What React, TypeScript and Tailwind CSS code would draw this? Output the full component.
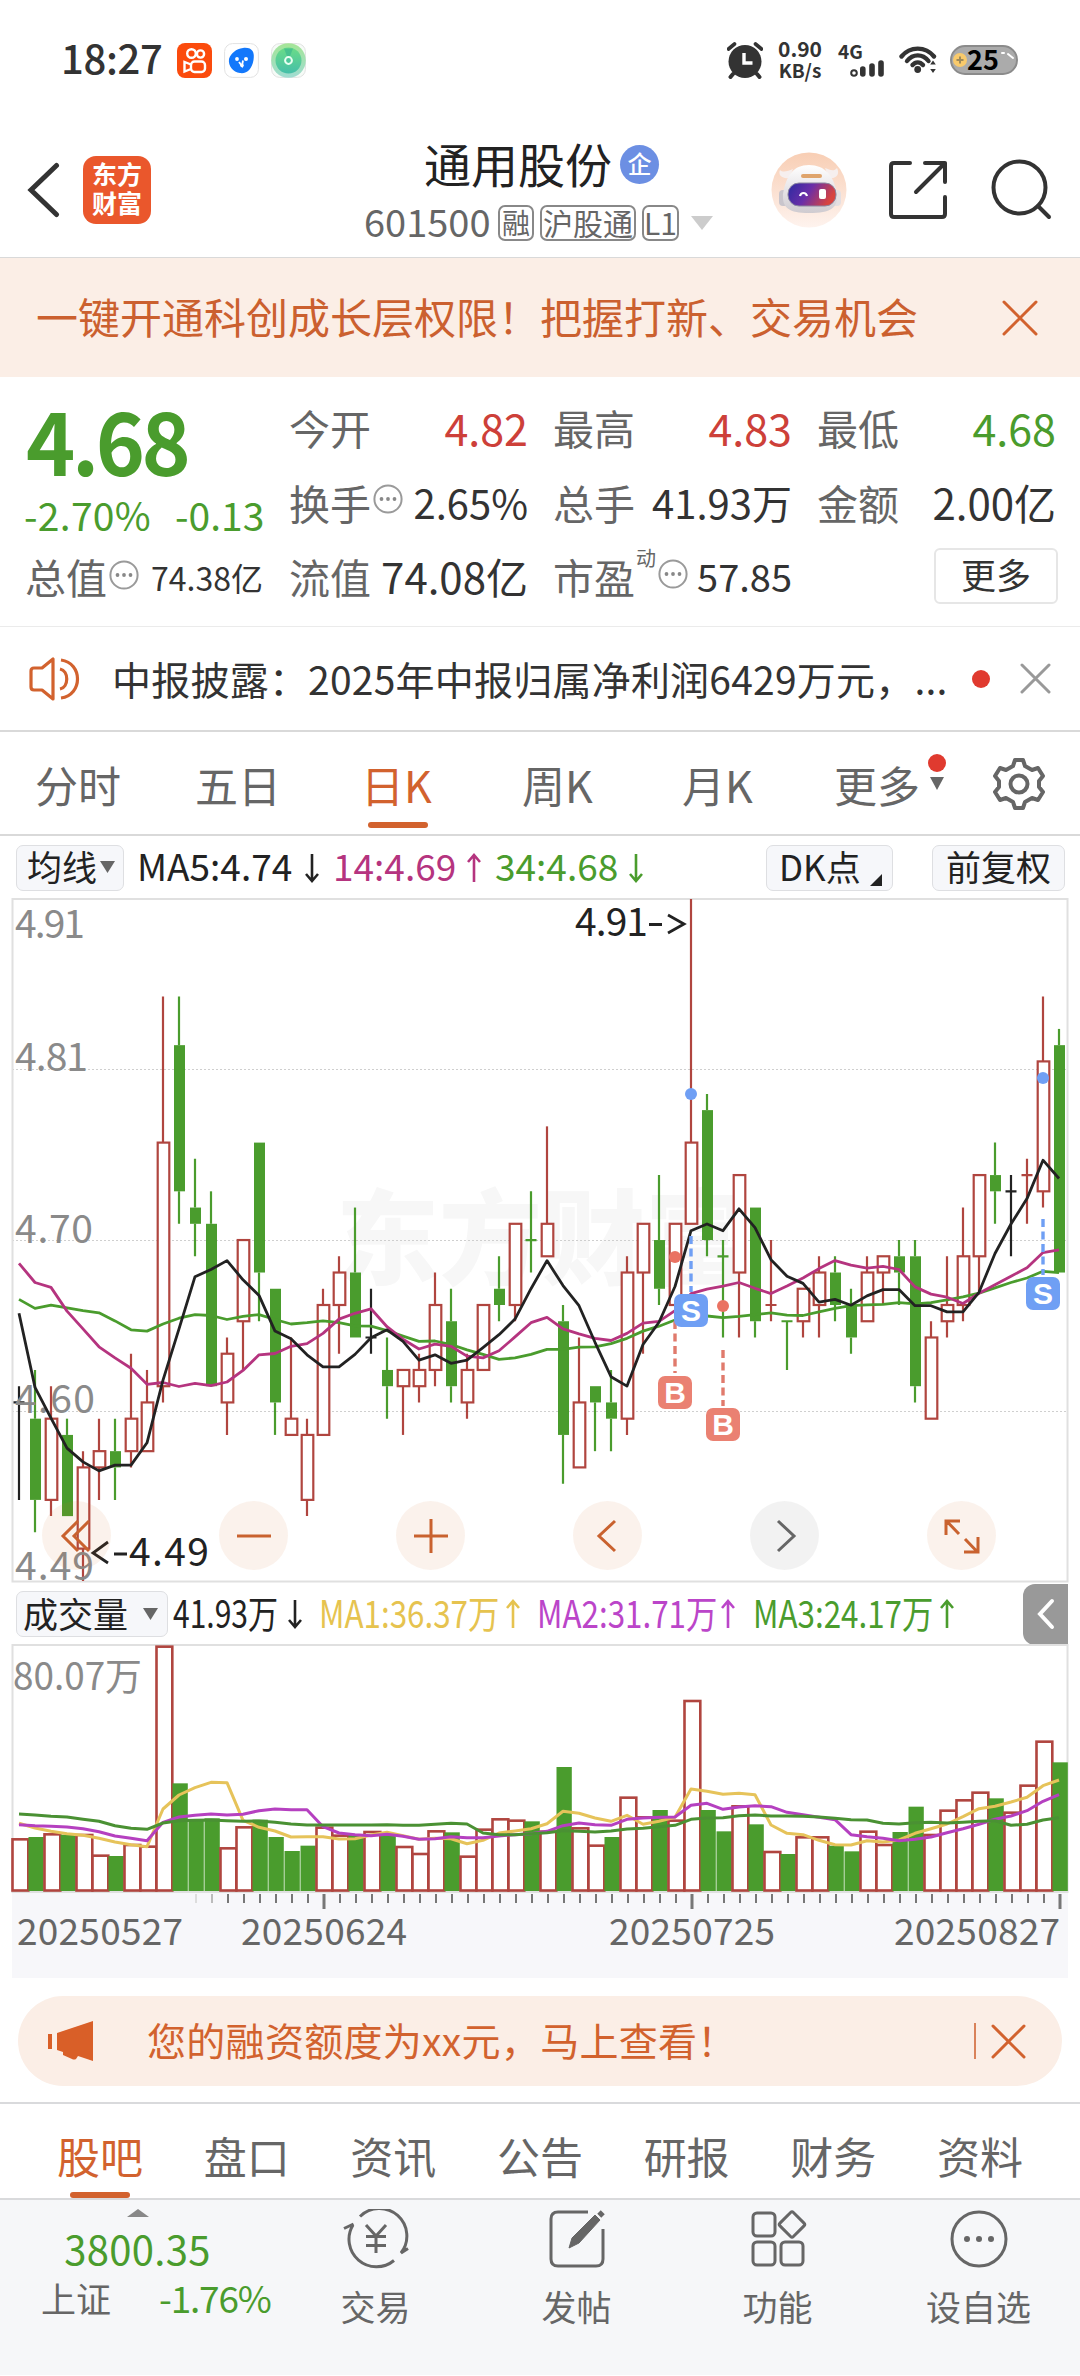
import React from "react";

type Kind = "r" | "g" | "k";
/** kind, high, body top, body bottom, low: all in cents below the chart's top price */
type Candle = [Kind, number, number, number, number];

const RED = "#b0453f";
const GREEN = "#4a9c2d";
const INK = "#222222";
const ORANGE = "#d2622e";

const candles: Candle[] = [
  ["k", 30, 31, 31, 37], ["g", 29, 32, 37, 39], ["r", 30, 32, 37, 38], ["g", 32, 33, 38, 38],
  ["r", 34, 35, 40, 42], ["r", 32, 34, 35, 37], ["g", 32, 34, 35, 37], ["r", 28, 32, 34, 35],
  ["r", 29, 31, 34, 34], ["r", 6, 15, 30, 31], ["g", 6, 9, 18, 20], ["g", 16, 19, 20, 22],
  ["g", 18, 20, 30, 30], ["r", 27, 28, 31, 33], ["r", 21, 21, 26, 29], ["g", 15, 15, 23, 26],
  ["g", 24, 24, 31, 33], ["r", 27, 32, 33, 33], ["r", 32, 33, 37, 38], ["r", 24, 25, 33, 33],
  ["r", 22, 23, 25, 28], ["g", 19, 23, 27, 27], ["k", 24, 27, 27, 28], ["g", 27, 29, 30, 32],
  ["r", 29, 29, 30, 33], ["r", 28, 29, 30, 31], ["r", 23, 25, 29, 30], ["g", 24, 26, 30, 31],
  ["r", 28, 29, 31, 32], ["r", 25, 25, 29, 29], ["g", 22, 24, 25, 26], ["r", 20, 20, 25, 26],
  ["g", 18, 21, 21, 23], ["r", 14, 20, 22, 22], ["g", 25, 26, 33, 36], ["r", 27, 31, 35, 35],
  ["g", 30, 30, 31, 34], ["g", 29, 31, 32, 34], ["r", 22, 23, 32, 33], ["r", 20, 20, 23, 28],
  ["g", 17, 21, 24, 25], ["r", 20, 20, 25, 25], ["r", 0, 15, 20, 20], ["g", 12, 13, 21, 22],
  ["g", 21, 22, 22, 27], ["r", 17, 17, 23, 27], ["g", 19, 19, 26, 27], ["r", 21, 25, 25, 26],
  ["g", 26, 26, 26, 29], ["r", 24, 24, 26, 27], ["r", 22, 23, 25, 27], ["g", 22, 23, 25, 26],
  ["g", 24, 25, 27, 28], ["r", 22, 23, 26, 26], ["r", 22, 22, 23, 25], ["g", 21, 22, 23, 25],
  ["g", 21, 22, 30, 31], ["r", 26, 27, 32, 32], ["r", 22, 25, 26, 27], ["r", 19, 22, 25, 26],
  ["r", 17, 17, 22, 24.3], ["g", 15, 17, 18, 20], ["k", 17, 18, 18, 22], ["r", 16, 17, 17, 20],
  ["r", 6, 10, 18, 19], ["g", 8, 9, 23, 23],
];

const ma5 = [950,1116,1185,1252,1283,1303,1290,1290,1240,1100,985,868,852,832,875,910,990,1007,1043,1070,1070,1042,1005,987,1013,1055,1043,1062,1055,1027,998,963,895,832,888,933,1015,1092,1113,1020,970,890,765,750,765,716,758,830,867,883,925,919,932,911,897,897,933,933,947,947,903,816,750,693,607,648];
const ma14 = [838,881,892,945,985,1025,1050,1073,1109,1105,1114,1107,1112,1104,1078,1043,1040,1024,1018,995,963,950,940,980,1008,1030,1019,1024,1046,1050,1034,1003,971,959,985,996,1006,1011,995,972,968,944,906,896,889,881,894,906,889,871,850,832,842,849,845,852,891,907,914,928,905,886,867,848,814,808];
const ma34 = [919,939,932,938,944,949,967,987,990,974,961,953,955,964,957,953,964,974,971,967,971,978,979,989,1001,1013,1012,1020,1032,1042,1053,1050,1042,1031,1031,1026,1025,1018,1006,990,979,965,949,956,960,957,953,949,954,955,947,939,933,931,930,926,929,926,920,913,905,893,881,871,856,859];

const volumes = [808,804,793,797,795,857,861,825,830,230,643,750,748,835,772,752,804,846,830,773,797,797,786,797,831,852,784,790,860,779,748,752,757,785,594,775,827,804,683,742,723,752,393,723,787,709,766,846,855,802,802,830,847,785,825,789,713,795,722,691,668,688,728,647,515,580];
const greenVolumes = new Set([1,3,6,10,11,12,15,16,17,18,21,23,27,32,34,37,40,43,44,46,48,51,52,55,56,61,65]);
const vma1 = [763,777,787,794,799,808,819,827,833,720,678,656,640,641,754,775,786,804,803,803,810,809,798,790,800,811,808,809,824,814,792,786,779,764,727,733,747,757,739,766,757,745,660,667,676,673,677,768,793,797,814,827,828,815,819,813,793,779,765,743,719,712,699,685,650,633];
const vma2 = [767,770,772,774,779,788,801,808,815,760,744,739,735,738,736,725,720,722,722,773,792,797,800,796,802,811,809,803,806,806,801,797,794,787,770,762,767,769,751,747,745,744,709,703,721,714,710,713,730,737,745,752,797,803,808,815,811,804,791,779,766,751,741,725,697,677];
const vma3 = [735,738,742,744,751,757,770,778,781,762,755,754,753,755,757,756,760,765,768,768,768,768,768,767,769,769,766,763,765,792,797,797,794,791,785,787,789,786,780,778,773,769,751,747,746,740,738,741,741,742,744,748,752,753,763,765,761,760,762,760,757,755,769,766,753,746];

const barX = (i: number) => 19 + 16 * i;
const priceY = (cents: number) => 16.24 * cents;
const linePoints = (values: number[], y: (v: number) => number) =>
  values.map((v, i) => `${barX(i)},${y(v).toFixed(1)}`).join(" ");
const maY = (v: number) => (v - 22) / 2.24;
const volY = (v: number) => (v - 228) / 3;

function Cross({ size, color, width = 3 }: { size: number; color: string; width?: number }) {
  return (
    <svg width={size} height={size} viewBox={`0 0 ${size} ${size}`} className="block shrink-0">
      <path d={`M2 2L${size - 2} ${size - 2}M${size - 2} 2L2 ${size - 2}`} stroke={color} strokeWidth={width} strokeLinecap="round" />
    </svg>
  );
}

function Down({ w, h, color }: { w: number; h: number; color: string }) {
  return (
    <svg width={w} height={h} viewBox="0 0 10 10" preserveAspectRatio="none" className="block shrink-0">
      <path d="M0 0H10L5 10Z" fill={color} />
    </svg>
  );
}

function Arrow({ up, color }: { up?: boolean; color: string }) {
  return (
    <svg width="18" height="32" viewBox="0 0 18 32" fill="none" className="block shrink-0">
      <path d={up ? "M9 30V3M3 10L9 3L15 10" : "M9 2V29M3 22L9 29L15 22"} stroke={color} strokeWidth="2.6" />
    </svg>
  );
}

function Dots() {
  return (
    <svg width="30" height="30" viewBox="0 0 30 30" className="block shrink-0">
      <circle cx="15" cy="15" r="13.6" fill="none" stroke="#9a9a9a" strokeWidth="2" />
      <circle cx="8.5" cy="15" r="1.9" fill="#888" />
      <circle cx="15" cy="15" r="1.9" fill="#888" />
      <circle cx="21.5" cy="15" r="1.9" fill="#888" />
    </svg>
  );
}

function StatusBar() {
  return (
    <div className="flex h-[120px] items-center pl-[61px] text-[#333]">
      <div className="-mt-[6px] w-[116px] text-[40px] font-medium leading-none tracking-[-0.3px]">18:27</div>
      <div className="flex gap-[12px]">
        <svg width="35" height="35" viewBox="0 0 35 35">
          <rect width="35" height="35" rx="8" fill="#fb4b0d" />
          <g fill="none" stroke="#fff" strokeWidth="2.4">
            <circle cx="14.500" cy="10.500" r="4.300" />
            <circle cx="23.500" cy="11" r="3.600" />
            <rect x="14" y="18.500" width="14" height="10.500" rx="3.500" />
            <path d="M14 21.500L7.500 19V28.500L14 26" />
          </g>
        </svg>
        <svg width="35" height="35" viewBox="0 0 35 35">
          <rect x=".6" y=".6" width="33.8" height="33.8" rx="8" fill="#fff" stroke="#e2e2e2" />
          <path d="M19 5C28 4 31 9 29.500 17C28 26 23 31 16 30C9 29 4 23 5 16C7 10 12 6 19 5Z" fill="#1378fb" />
          <circle cx="13" cy="16" r="1.900" fill="#fff" />
          <circle cx="22" cy="16" r="2" fill="#fff" />
          <path d="M15 19L18 23L19 17.500" fill="none" stroke="#fff" strokeWidth="1.800" />
          <circle cx="18" cy="22.500" r="1.800" fill="#fff" />
        </svg>
        <svg width="35" height="35" viewBox="0 0 35 35">
          <defs>
            <linearGradient id="leaf" x1="0" y1="0" x2="0" y2="1">
              <stop offset="0" stopColor="#6bdc87" />
              <stop offset="1" stopColor="#45bfa9" />
            </linearGradient>
            <linearGradient id="ring" x1="0" y1="0" x2="0" y2="1">
              <stop offset="0" stopColor="#a5e596" />
              <stop offset="1" stopColor="#9fdcd2" />
            </linearGradient>
          </defs>
          <rect x=".6" y=".6" width="33.8" height="33.8" rx="8" fill="#f6fbf7" stroke="#e2e2e2" />
          <circle cx="17.5" cy="17.5" r="17.300" fill="url(#ring)" />
          <circle cx="17.5" cy="17.5" r="13" fill="url(#leaf)" />
          <path d="M17.5 17L13 5.500H22Z" fill="#3db98e" opacity=".7" />
          <circle cx="17.5" cy="17.5" r="3.4" fill="#4cc79b" stroke="#eafff2" strokeWidth="2" />
        </svg>
      </div>
      <svg width="36" height="37" viewBox="0 0 36 37" className="ml-[421px]">
        <circle cx="18" cy="19.5" r="16.5" fill="#333" />
        <path d="M6 32L3.5 35M30 32L32.500 35" stroke="#333" strokeWidth="4" strokeLinecap="round" />
        <path d="M1.500 7L7.500 2M34.500 7L28.500 2" stroke="#333" strokeWidth="3.600" strokeLinecap="round" />
        <path d="M17 11V21H25.500" stroke="#fff" strokeWidth="3.400" fill="none" />
      </svg>
      <div className="-mt-[2px] ml-[14px] flex w-[46px] flex-col items-center text-[21px] font-bold leading-[21px]">
        <span>0.90</span>
        <span className="text-[19px]">KB/s</span>
      </div>
      <div className="ml-[15px] flex w-[47px] flex-col text-[19px] font-bold leading-[18px]">
        <span>4G</span>
        <svg width="36" height="18" viewBox="0 0 36 18" className="ml-[12px]">
          <circle cx="4" cy="13" r="2.800" fill="none" stroke="#333" strokeWidth="2" />
          <path d="M12.800 9V14M22 6V14M31 3V14" stroke="#333" strokeWidth="5.600" strokeLinecap="round" />
        </svg>
      </div>
      <svg width="38" height="30" viewBox="0 0 38 30" className="ml-[14px]" fill="none" stroke="#333" strokeWidth="4.400" strokeLinecap="round">
        <path d="M2.500 11.500C11 1 26.500 1 35 11.500" />
        <path d="M8 16C14 8.500 23.500 8.500 29.500 16" />
        <path d="M13.500 20C16.500 16.500 21 16.500 24 20" />
        <circle cx="18.700" cy="24.500" r="3.400" fill="#333" stroke="none" />
        <path d="M34 15.500L36.800 19.500H31.200ZM34 28L36.800 24H31.200Z" fill="#333" stroke="none" />
      </svg>
      <div className="ml-[13px] flex h-[30px] w-[68px] items-center rounded-full border-2 border-[#8b8b8b] bg-[#ababab]">
        <svg width="14" height="16" viewBox="0 0 14 16" className="ml-[1px]">
          <circle cx="7" cy="8" r="7" fill="#f9ca6b" />
          <path d="M7 4.500V11.500M3.500 8H10.500" stroke="#9f8a5a" strokeWidth="2" />
        </svg>
        <span className="-mt-[4px] text-[27px] font-bold leading-none text-black">25</span>
        <svg width="14" height="20" viewBox="0 0 14 20" fill="none" stroke="#fff" strokeWidth="2" strokeLinecap="round" className="ml-[1px]">
          <path d="M2 3H4M8 4L13 8" />
        </svg>
      </div>
    </div>
  );
}

function Header() {
  return (
    <div className="flex h-[138px] items-center border-b border-[#d9d9d9] pt-[2px] text-[#222]">
      <svg width="34" height="56" viewBox="0 0 34 56" fill="none" className="ml-[27px]">
        <path d="M29.500 3.500L4 28L29.500 52.500" stroke="#333" strokeWidth="5" strokeLinecap="round" />
      </svg>
      <div className="ml-[22px] flex h-[68px] w-[68px] flex-col items-center justify-center rounded-[13px] bg-[#ea572c] pb-[3px] text-[25px] font-semibold leading-[29px] text-white">
        <span>东方</span>
        <span>财富</span>
      </div>
      <div className="ml-[213px] flex w-[350px] flex-col">
        <div className="flex h-[52px] items-center pl-[60px]">
          <span className="-mt-[3px] text-[47px] leading-none">通用股份</span>
          <span className="ml-[8px] flex h-[39px] w-[39px] items-center justify-center rounded-full bg-[#6c8fe3] pb-[3px] text-[24px] font-medium leading-none text-white">企</span>
        </div>
        <div className="mt-[15px] flex h-[36px] items-center text-[#666]">
          <span className="-mt-[5px] w-[134px] text-[38px] leading-none">601500</span>
          <span className="flex h-[36px] w-[36px] items-center justify-center rounded-[7px] border-2 border-[#888] pb-[3px] text-[28px] leading-none">融</span>
          <span className="ml-[6px] flex h-[36px] w-[96px] items-center justify-center rounded-[7px] border-2 border-[#888] pb-[3px] text-[30px] leading-none">沪股通</span>
          <span className="ml-[6px] flex h-[36px] w-[37px] items-center justify-center rounded-[7px] border-2 border-[#888] pb-[3px] text-[30px] leading-none">L1</span>
          <span className="ml-[12px]"><Down w={22} h={14} color="#ccc" /></span>
        </div>
      </div>
      <svg width="76" height="76" viewBox="0 0 76 76" className="ml-[57px]">
        <defs>
          <linearGradient id="halo" x1="0" y1="0" x2="0" y2="1">
            <stop offset="0" stopColor="#f8ceb4" />
            <stop offset="1" stopColor="#fef3ee" />
          </linearGradient>
          <linearGradient id="visor" x1="0" y1="0" x2="1" y2="0.300">
            <stop offset="0" stopColor="#2b2aa0" />
            <stop offset=".5" stopColor="#6a2fa8" />
            <stop offset="1" stopColor="#d8433f" />
          </linearGradient>
          <linearGradient id="shell" x1="0" y1="0" x2="0" y2="1">
            <stop offset="0" stopColor="#ffffff" />
            <stop offset="1" stopColor="#cfcbd0" />
          </linearGradient>
        </defs>
        <circle cx="38" cy="38" r="37.500" fill="url(#halo)" />
        <path d="M18 26C10 27 7 22 9 18C12 21 17 19 22 17ZM58 26C66 27 69 22 66 16C63 20 59 18 54 16Z" fill="#f6efee" />
        <rect x="8" y="38" width="9" height="16" rx="4" fill="#c9c5cc" />
        <rect x="61" y="38" width="9" height="16" rx="4" fill="#e4dfe2" />
        <path d="M38 13C54 13 63 24 66 42C67 56 60 61 38 61C18 61 11 56 12 42C15 24 22 13 38 13Z" fill="url(#shell)" />
        <rect x="17" y="31" width="48" height="23" rx="11" fill="url(#visor)" stroke="#8a86a0" />
        <rect x="30" y="22" width="21" height="4" rx="2" fill="#dfa46c" />
        <path d="M29 44C30 40 35 40 36 44" fill="none" stroke="#fff" strokeWidth="2.200" />
        <rect x="48" y="37" width="7" height="10" rx="2" fill="#fff" />
      </svg>
      <svg width="60" height="60" viewBox="0 0 60 60" fill="none" stroke="#333" strokeWidth="4" strokeLinecap="round" strokeLinejoin="round" className="ml-[41px]">
        <path d="M22 3H6Q3 3 3 6V54Q3 57 6 57H54Q57 57 57 54V37" />
        <path d="M37 3H57V22M57 3L28 32" />
      </svg>
      <svg width="62" height="62" viewBox="0 0 62 62" fill="none" stroke="#333" strokeWidth="4" strokeLinecap="round" className="ml-[43px]">
        <circle cx="28.500" cy="28.500" r="26" />
        <path d="M47 47L58 58" />
      </svg>
    </div>
  );
}

function Quote() {
  return (
    <div className="flex h-[250px] border-b border-[#ebebeb] pl-[26px] leading-none text-[#333]">
      <div className="flex w-[264px] flex-col">
        <span className="mt-[18px] origin-left scale-x-[.96] text-[87px] font-semibold leading-[87px] tracking-[-3.5px] text-[#4a9c2d]">4.68</span>
        <div className="mt-[12px] flex h-[40px] items-center text-[39px] text-[#4a9c2d]">
          <span className="-ml-[2px] w-[151px] tracking-[0.3px]">-2.70%</span>
          <span>-0.13</span>
        </div>
        <div className="mt-[22px] flex h-[42px] items-center">
          <span className="-ml-[1px] -mt-[2px] w-[84px] text-[41px] text-[#666]">总值</span>
          <span className="-mt-[4px]"><Dots /></span>
          <span className="ml-[12px] text-[32px]">74.38亿</span>
        </div>
      </div>
      <div className="flex w-[238px] flex-col">
        <div className="mt-[29px] flex h-[42px] items-center justify-between">
          <span className="-ml-[1px] text-[41px] text-[#666]">今开</span>
          <span className="text-[43px] text-[#cd4039]">4.82</span>
        </div>
        <div className="mt-[33px] flex h-[42px] items-center">
          <span className="-ml-[1px] w-[84px] text-[41px] text-[#666]">换手</span>
          <span className="-mt-[6px]"><Dots /></span>
          <span className="ml-auto text-[40px]">2.65%</span>
        </div>
        <div className="mt-[32px] flex h-[42px] items-center justify-between">
          <span className="-ml-[1px] text-[41px] text-[#666]">流值</span>
          <span className="text-[42px]">74.08亿</span>
        </div>
      </div>
      <div className="ml-[26px] flex w-[238px] flex-col">
        <div className="mt-[29px] flex h-[42px] items-center justify-between">
          <span className="-ml-[1px] text-[41px] text-[#666]">最高</span>
          <span className="text-[43px] text-[#cd4039]">4.83</span>
        </div>
        <div className="mt-[33px] flex h-[42px] items-center justify-between">
          <span className="-ml-[1px] text-[41px] text-[#666]">总手</span>
          <span className="text-[40px]">41.93万</span>
        </div>
        <div className="mt-[32px] flex h-[42px] items-center">
          <span className="-ml-[1px] text-[41px] text-[#666]">市盈</span>
          <span className="mb-[36px] ml-[1px] text-[20px] text-[#666]">动</span>
          <span className="-mt-[4px] ml-[2px]"><Dots /></span>
          <span className="ml-auto text-[38px]">57.85</span>
        </div>
      </div>
      <div className="ml-[26px] flex w-[238px] flex-col">
        <div className="mt-[29px] flex h-[42px] items-center justify-between">
          <span className="-ml-[1px] text-[41px] text-[#666]">最低</span>
          <span className="text-[43px] text-[#4a9c2d]">4.68</span>
        </div>
        <div className="mt-[33px] flex h-[42px] items-center justify-between">
          <span className="-ml-[1px] text-[41px] text-[#666]">金额</span>
          <span className="text-[42px]">2.00亿</span>
        </div>
        <div className="-mr-[2px] mt-[25px] flex h-[56px] w-[124px] items-center justify-center self-end rounded-[6px] border-2 border-[#e6e6e6] pb-[5px] text-[35px]">更多</div>
      </div>
    </div>
  );
}

function News() {
  return (
    <div className="flex h-[105px] items-center border-b-2 border-[#d9d9d9] text-[#333]">
      <svg width="52" height="46" viewBox="0 0 52 46" fill="none" stroke={ORANGE} strokeWidth="3.200" strokeLinejoin="round" className="ml-[29px]">
        <path d="M24 3V43L13 34H5Q2 34 2 31V15Q2 12 5 12H13Z" />
        <path d="M31 13C40 15 40 31 31 33M32 4C54 7 54 39 32 42" />
      </svg>
      <span className="ml-[31px] w-[860px] whitespace-nowrap text-[39px] leading-none tracking-[0.220px]">中报披露：2025年中报归属净利润6429万元，...</span>
      <span className="h-[18px] w-[18px] rounded-full bg-[#e03a2f]" />
      <span className="ml-[30px]"><Cross size={31} color="#999" /></span>
    </div>
  );
}

function PeriodTabs() {
  return (
    <div className="flex h-[104px] border-b-2 border-[#d9d9d9] text-[43px] leading-none text-[#666]">
      <span className="ml-[35px] w-[160px] pt-[31px]">分时</span>
      <span className="w-[166px] pt-[31px]">五日</span>
      <span className="flex w-[161px] flex-col pt-[31px] text-[#d2622e]">
        <span>日K</span>
        <span className="ml-[7px] mt-[16px] h-[6px] w-[60px] rounded-full bg-[#d2622e]" />
      </span>
      <span className="w-[160px] pt-[31px]">周K</span>
      <span className="w-[152px] pt-[31px]">月K</span>
      <span className="pt-[31px]">更多</span>
      <span className="ml-[8px] flex w-[18px] flex-col items-center pt-[22px]">
        <span className="h-[18px] w-[18px] rounded-full bg-[#e03a2f]" />
        <span className="mt-[5px]"><Down w={14} h={13} color="#666" /></span>
      </span>
      <svg width="54" height="54" viewBox="0 0 54 54" fill="none" stroke="#666" strokeWidth="4" strokeLinejoin="round" className="ml-[46px] mt-[25px]">
        <path d="M23 3H31L33 9L40 13L46 11L51 19L47 24V30L51 35L46 43L40 41L33 45L31 51H23L21 45L14 41L8 43L3 35L7 30V24L3 19L8 11L14 13L21 9Z" />
        <circle cx="27" cy="27" r="8.500" />
      </svg>
    </div>
  );
}

function MaRow() {
  return (
    <div className="flex h-[63px] items-center pl-[16px] leading-none text-[#222]">
      <div className="flex h-[46px] w-[108px] items-center rounded-[7px] border border-[#dedfe2] bg-[#f6f7fa] pb-[4px] pl-[10px] text-[35px]">
        均线
        <span className="ml-[3px] mt-[3px]"><Down w={15} h={12} color="#666" /></span>
      </div>
      <span className="-mt-[4px] ml-[13px] w-[166px] text-[37px]">MA5:4.74</span>
      <Arrow color={INK} />
      <span className="-mt-[4px] ml-[12px] w-[132px] text-[37px] text-[#b5347f]">14:4.69</span>
      <Arrow up color="#b5347f" />
      <span className="-mt-[4px] ml-[12px] w-[132px] text-[37px] text-[#4a9c2d]">34:4.68</span>
      <Arrow color={GREEN} />
      <div className="ml-[121px] flex h-[46px] w-[127px] items-center rounded-[7px] border border-[#dedfe2] bg-[#f6f7fa] pb-[4px] pl-[12px] text-[35px]">
        DK点
        <svg width="12" height="12" viewBox="0 0 12 12" className="ml-[9px] mt-[28px]"><path d="M12 0V12H0Z" fill="#222" /></svg>
      </div>
      <div className="ml-[39px] flex h-[46px] w-[133px] items-center justify-center rounded-[7px] border border-[#dedfe2] bg-[#f6f7fa] pb-[4px] text-[35px]">前复权</div>
    </div>
  );
}

function Marker({ x, y, letter }: { x: number; y: number; letter: "S" | "B" }) {
  return (
    <g>
      <rect x={x - 17} y={y} width="34" height="33" rx="7" fill={letter === "S" ? "#6f9ff4" : "#ea8172"} />
      <text x={x} y={y + 27} textAnchor="middle" fontSize="30" fontWeight="700" fill="#fff" className="font-['Liberation_Sans',sans-serif]">{letter}</text>
    </g>
  );
}

function RoundButton({ muted, children }: { muted?: boolean; children: React.ReactNode }) {
  return (
    <div className={`flex h-[69px] w-[69px] items-center justify-center rounded-full ${muted ? "bg-black/5" : "bg-[#d2722e]/9"}`}>
      <svg width="40" height="40" viewBox="0 0 40 40" fill="none" stroke={muted ? "#666" : "#c9622f"} strokeWidth="3">{children}</svg>
    </div>
  );
}

function PriceChart() {
  return (
    <div className="relative h-[684px]">
      <svg width="1080" height="684" viewBox="0 0 1080 684" className="block overflow-visible">
        <text x="336" y="378" fontSize="103" fontWeight="900" fill="#f7f7f7">东方财富</text>
        <g stroke="#cfcfcf" strokeWidth="1" strokeDasharray="2 2">
          <path d="M12 170.500H1067M12 341.500H1067M12 512.500H1067" />
        </g>
        <rect x="12.500" y="0" width="1055" height="682.500" fill="none" stroke="#e0e0e0" strokeWidth="2" />
        {candles.map(([kind, high, top, bottom, low], i) => {
          const x = barX(i);
          const color = kind === "r" ? RED : kind === "g" ? GREEN : INK;
          if (top === bottom) {
            return <path key={i} d={`M${x} ${priceY(high)}V${priceY(low)}M${x - 5.500} ${priceY(top)}H${x + 5.500}`} stroke={color} strokeWidth="2.200" />;
          }
          return (
            <g key={i} stroke={color} strokeWidth="2.200">
              <path d={`M${x} ${priceY(high)}V${priceY(top)}M${x} ${priceY(bottom)}V${priceY(low)}`} />
              {kind === "g" ? (
                <rect x={x - 5} y={priceY(top)} width="11" height={priceY(bottom - top)} fill={GREEN} stroke="none" />
              ) : (
                <rect x={x - 5.300} y={priceY(top)} width="11.600" height={priceY(bottom - top)} fill="#fff" />
              )}
            </g>
          );
        })}
        <g fontSize="39" fill="#8a8a8a">
          <text x="15" y="39" textLength="70">4.91</text>
          <text x="15" y="172" textLength="73">4.81</text>
          <text x="15" y="344" textLength="78">4.70</text>
          <text x="15" y="514" textLength="80">4.60</text>
          <text x="15" y="681" textLength="79">4.49</text>
        </g>
        <g fill="none" strokeWidth="2.800" strokeLinejoin="round">
          <polyline points={linePoints(ma34, maY)} stroke={GREEN} />
          <polyline points={linePoints(ma14, maY)} stroke="#b5347f" />
          <polyline points={linePoints(ma5, maY)} stroke={INK} />
        </g>
        <g strokeWidth="3.400" strokeDasharray="8 4.500" fill="none">
          <path d="M691 337V393M1043 320V376" stroke="#6f9ff4" />
          <path d="M675 422V474M723 451V507" stroke="#e07a6c" />
        </g>
        <circle cx="691" cy="195" r="6" fill="#6f9ff4" />
        <circle cx="1043" cy="179" r="6" fill="#6f9ff4" />
        <circle cx="675" cy="358" r="6" fill="#ea7262" />
        <circle cx="723" cy="407" r="6" fill="#ea7262" />
        <Marker x={691} y={395} letter="S" />
        <Marker x={675} y={477} letter="B" />
        <Marker x={723} y={509} letter="B" />
        <Marker x={1043} y={378} letter="S" />
        <g fontSize="39" fill={INK}>
          <text x="575" y="37" textLength="73">4.91</text>
          <path d="M649 25.500H662M668 16L684 25L668 34" fill="none" stroke={INK} strokeWidth="2.800" />
          <path d="M108 643L93 654L108 664M114 655H127" fill="none" stroke={INK} strokeWidth="2.800" />
          <text x="129" y="667" textLength="80">4.49</text>
        </g>
      </svg>
      <div className="absolute inset-x-0 top-[602px] flex justify-between pl-[42px] pr-[84px]">
        <RoundButton><path d="M21 5L6 20L21 35M32 5L17 20L32 35" /></RoundButton>
        <RoundButton><path d="M3 20H37" /></RoundButton>
        <RoundButton><path d="M3 20H37M20 3V37" /></RoundButton>
        <RoundButton><path d="M27 5L11 20L27 35" /></RoundButton>
        <RoundButton muted><path d="M13 5L29 20L13 35" /></RoundButton>
        <RoundButton>
          <path d="M4 19V5H18M4.500 5L17 18M36 21V36H22M35.500 36L23 23" />
        </RoundButton>
      </div>
    </div>
  );
}

function VolumeLegend() {
  return (
    <div className="flex h-[62px] items-center pl-[16px] leading-none text-[#222]">
      <div className="flex h-[46px] w-[152px] shrink-0 items-center rounded-[7px] border border-[#dedfe2] bg-[#f6f7fa] pb-[4px] pl-[6px] text-[35px]">
        成交量
        <span className="ml-[15px] mt-[3px]"><Down w={15} h={12} color="#666" /></span>
      </div>
      <span className="-mt-[4px] ml-[5px] w-[113px] shrink-0 whitespace-nowrap"><span className="inline-block origin-left scale-x-[.79] text-[38px]">41.93万</span></span>
      <Arrow color={INK} />
      <span className="-mt-[4px] ml-[15px] w-[185px] shrink-0 whitespace-nowrap"><span className="inline-block origin-left scale-x-[.825] text-[38px] text-[#e6c34f]">MA1:36.37万</span></span>
      <Arrow up color="#e6c34f" />
      <span className="-mt-[4px] ml-[15px] w-[182px] shrink-0 whitespace-nowrap"><span className="inline-block origin-left scale-x-[.825] text-[38px] text-[#bb45c9]">MA2:31.71万</span></span>
      <Arrow up color="#bb45c9" />
      <span className="-mt-[4px] ml-[16px] w-[185px] shrink-0 whitespace-nowrap"><span className="inline-block origin-left scale-x-[.825] text-[38px] text-[#4a9c2d]">MA3:24.17万</span></span>
      <Arrow up color={GREEN} />
      <div className="ml-auto mr-[12px] flex h-[61px] w-[45px] items-center justify-center rounded-l-[12px] bg-[#999]">
        <svg width="20" height="32" viewBox="0 0 20 32" fill="none"><path d="M16 3L4 16L16 29" stroke="#fff" strokeWidth="4" strokeLinecap="round" /></svg>
      </div>
    </div>
  );
}

function VolumeChart() {
  const base = 246;
  return (
    <div className="flex flex-col">
      <svg width="1080" height="248" viewBox="0 0 1080 248" className="block overflow-visible">
        <rect x="12.500" y="0" width="1055" height="247" fill="none" stroke="#e0e0e0" strokeWidth="2" />
        <text x="13" y="45" fontSize="38" fill="#8a8a8a" textLength="129" lengthAdjust="spacingAndGlyphs">80.07万</text>
        {volumes.map((v, i) => {
          const left = barX(i) - 6.500;
          const top = volY(v);
          return greenVolumes.has(i) ? (
            <rect key={i} x={left} y={top} width="15.300" height={base - top} fill={GREEN} />
          ) : (
            <rect key={i} x={left} y={top + 1} width="15.800" height={base - top - 1.500} fill="#fff" stroke={RED} strokeWidth="2.600" />
          );
        })}
        <g fill="none" strokeWidth="3" strokeLinejoin="round">
          <polyline points={linePoints(vma1, volY)} stroke="#e6c35a" />
          <polyline points={linePoints(vma2, volY)} stroke="#b540c0" />
          <polyline points={linePoints(vma3, volY)} stroke="#4a9133" />
        </g>
      </svg>
      <div className="ml-[12px] h-[85px] w-[1056px] bg-[#f7f7fa]">
        <svg width="1056" height="18" viewBox="12 0 1056 18" className="block">
          {volumes.map((_, i) => {
            if (i < 11) return null;
            const major = i === 19 || i === 42 || i === 65;
            const stroke = i === 11 ? "#ddd" : i === 12 ? "#bbb" : "#777";
            return <path key={i} d={`M${barX(i) + 1} 1V${major ? 16 : 10}`} stroke={stroke} strokeWidth={major ? 3 : 2} />;
          })}
        </svg>
        <div className="flex pl-[5px] text-[37px] leading-[37px] tracking-[0.250px] text-[#666]">
          <span className="w-[224px]">20250527</span>
          <span className="w-[368px]">20250624</span>
          <span className="w-[285px]">20250725</span>
          <span>20250827</span>
        </div>
      </div>
    </div>
  );
}

function Promo() {
  return (
    <div className="mx-[18px] mt-[18px] flex h-[90px] items-center rounded-full bg-[#fbeee6] text-[#d2622e]">
      <svg width="46" height="40" viewBox="0 0 46 40" className="ml-[29px]">
        <path d="M10 12L46 0V40L31 35L29 38Q27 39 25 38L16 34L16 31L10 29Z" fill="#d95f28" />
        <rect x="1" y="13" width="4" height="15" fill="#d95f28" />
      </svg>
      <span className="-mt-[4px] ml-[54px] w-[827px] whitespace-nowrap text-[39px] leading-none tracking-[0.3px]">您的融资额度为xx元，马上查看！</span>
      <span className="h-[36px] w-[2px] bg-[#d9825a]" />
      <span className="ml-[15px]"><Cross size={35} color={ORANGE} /></span>
    </div>
  );
}

function SectionTabs() {
  const tabs = ["股吧", "盘口", "资讯", "公告", "研报", "财务", "资料"];
  return (
    <div className="mt-[16px] flex h-[98px] justify-between border-y-2 border-[#d9dadc] px-[57px] text-[43px] leading-none text-[#666]">
      {tabs.map((name, i) => (
        <div key={name} className={i === 0 ? "flex flex-col items-center pt-[30px] text-[#d2622e]" : "pt-[30px]"}>
          {name}
          {i === 0 && <span className="mt-[15px] h-[6px] w-[60px] rounded-full bg-[#d2622e]" />}
        </div>
      ))}
    </div>
  );
}

function NavItem({ label, children }: { label: string; children: React.ReactNode }) {
  return (
    <div className="flex w-[201px] flex-col items-center pt-[9px]">
      <svg width="66" height="60" viewBox="0 0 66 60" fill="none" stroke="#666" strokeWidth="3">{children}</svg>
      <span className="mt-[19px] text-[35px] leading-none">{label}</span>
    </div>
  );
}

function BottomBar() {
  return (
    <div className="flex h-[175px] bg-[#f6f7f9] leading-none text-[#666]">
      <div className="flex w-[275px] flex-col items-center">
        <svg width="22" height="8" viewBox="0 0 22 8" className="mt-[9px]"><path d="M0 8L11 0L22 8Z" fill="#888" /></svg>
        <span className="mt-[11px] text-[40px] tracking-[0.300px] text-[#4a9c2d]">3800.35</span>
        <div className="mt-[11px] flex items-center self-start pl-[41px]">
          <span className="w-[118px] text-[35px]">上证</span>
          <span className="text-[37px] tracking-[-1.200px] text-[#4a9c2d]">-1.76%</span>
        </div>
      </div>
      <NavItem label="交易">
        <path d="M17 7.500A27.500 27.500 0 0 1 58 44L65 39.500M10 16A27.500 27.500 0 0 0 51 51.500M10.500 15L1 19.500" />
        <path d="M23 16L33 27L43 16M33 27V44M23 27.500H43M23 36.500H43" />
      </NavItem>
      <NavItem label="发帖">
        <path d="M44 3H14Q7 3 7 10V50Q7 57 14 57H52Q59 57 59 50V20" />
        <path d="M25 39L28 29L51 6L56 11L35 34Z" fill="#666" strokeWidth="1" />
        <path d="M55 3L59 7" strokeWidth="5" />
      </NavItem>
      <NavItem label="功能">
        <rect x="8" y="4" width="22" height="23" rx="4" />
        <rect x="8" y="33" width="22" height="23" rx="4" />
        <rect x="36" y="33" width="22" height="23" rx="4" />
        <rect x="37.500" y="6" width="19" height="19" rx="2" transform="rotate(45 47 15.500)" />
      </NavItem>
      <NavItem label="设自选">
        <circle cx="33" cy="30" r="27" />
        <g fill="#666" stroke="none">
          <circle cx="21" cy="30" r="3" />
          <circle cx="33" cy="30" r="3" />
          <circle cx="45" cy="30" r="3" />
        </g>
      </NavItem>
    </div>
  );
}

export default function App() {
  return (
    <div className="flex h-[2376px] w-[1080px] flex-col overflow-hidden bg-white font-['Noto_Sans_CJK_SC',sans-serif]">
      <StatusBar />
      <Header />
      <div className="flex h-[119px] items-center bg-[#fbeee6] pl-[36px] text-[#cb602f]">
        <span className="-mt-[3px] w-[966px] whitespace-nowrap text-[42px] leading-none">一键开通科创成长层权限！把握打新、交易机会</span>
        <Cross size={36} color={ORANGE} />
      </div>
      <Quote />
      <News />
      <PeriodTabs />
      <MaRow />
      <PriceChart />
      <VolumeLegend />
      <VolumeChart />
      <Promo />
      <SectionTabs />
      <BottomBar />
    </div>
  );
}
